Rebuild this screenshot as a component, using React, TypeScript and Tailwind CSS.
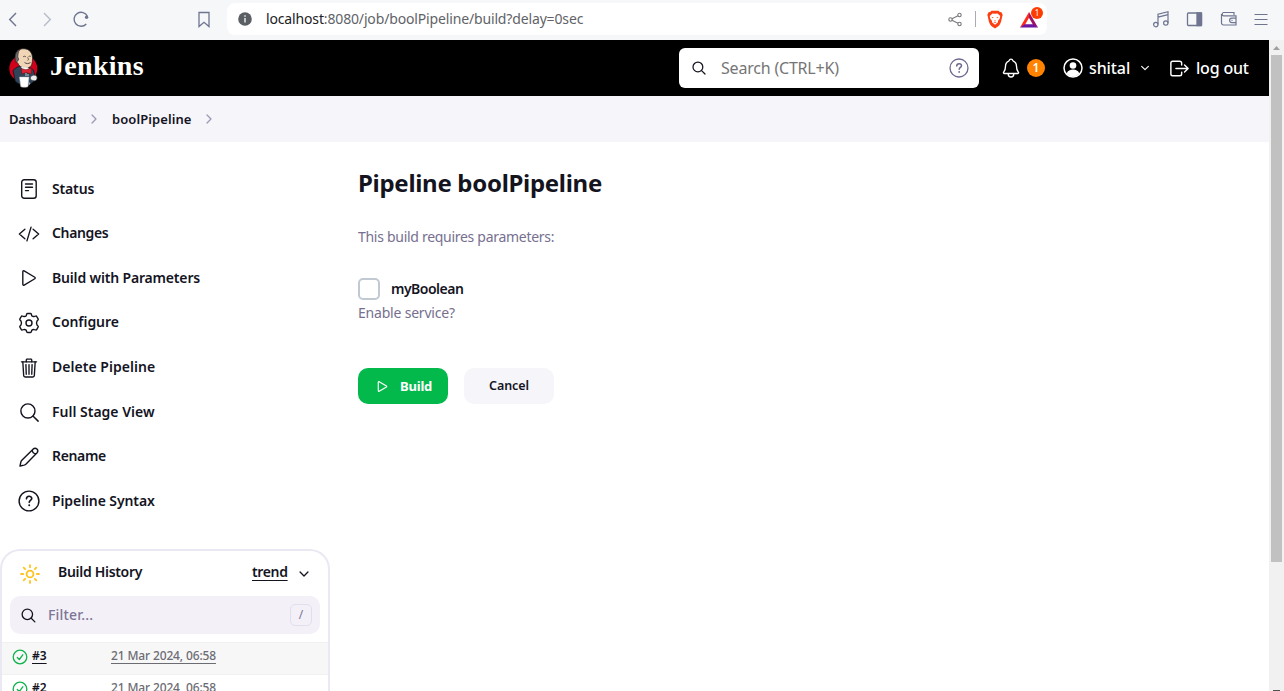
import React from "react";
import {
  IoCodeSlashOutline,
  IoPlayOutline,
  IoTrashOutline,
  IoSearchOutline,
  IoNotificationsOutline,
  IoLogOutOutline,
  IoChevronForward,
  IoChevronDown,
  IoSunnyOutline,
} from "react-icons/io5";

function BraveIcon() {
  return (
    <svg className="ml-[11px] h-[19px] w-4" viewBox="0 0 16 19">
      <path d="M4.500.7h7l1.300 1.400 1.700.2L15.700 5l-.5 1.500c-.6 3-1.200 6.500-2.700 8.600C11.500 16.500 9.200 18 8 18.500c-1.200-.5-3.500-2-4.500-3.400C2 13 1.400 9.500.8 6.500L.3 5l1.200-2.700 1.700-.2z" fill="#fb3f12" />
      <path d="m5.500 3.400 2.500.4 2.500-.4 2.700 2.500-.5 2.800-1.800 2.200.1 1.300L8 14.800l-3-2.600.1-1.300-1.800-2.200-.5-2.800z" fill="#fff" />
      <path d="m4.300 6.800 2.200.5-.6.900zM11.700 6.800l-2.200.5.6.9zM7 10.500h2L8 11.500zM6.300 12.400l1.700-.7 1.700.7-1.700.4z" fill="#fb3f12" />
    </svg>
  );
}

function BrowserBar() {
  return (
    <div className="flex h-10 w-full shrink-0 items-center bg-[#f5f7f9] text-[#6f7590]">
      <div className="flex w-[227px] items-center pb-[3px]">
        <svg className="ml-[5px] size-4" viewBox="0 0 16 16" fill="none" stroke="currentColor" strokeWidth="1.4">
          <path d="M11 2 4.700 8.500 11 15" />
        </svg>
        <svg className="ml-[18px] size-4 text-[#b8bcc8]" viewBox="0 0 16 16" fill="none" stroke="currentColor" strokeWidth="1.4">
          <path d="M5 2 11.300 8.500 5 15" />
        </svg>
        <svg className="ml-[17px] size-[18px]" viewBox="0 0 18 18" fill="none" stroke="currentColor" strokeWidth="1.4">
          <path d="M15.500 6.500A7 7 0 1 0 14.300 14" />
          <circle cx="14.600" cy="7.300" r="1.700" fill="currentColor" stroke="none" />
        </svg>
        <svg className="ml-[105px] size-[18px]" viewBox="0 0 18 18" fill="none" stroke="currentColor" strokeWidth="1.300">
          <path d="M4 2.500h10v14L9 12.300 4 16.500z" />
        </svg>
      </div>
      <div className="mb-0.5 flex h-8 w-[820px] items-center rounded-lg bg-white">
        <svg className="ml-[11px] size-[14px]" viewBox="0 0 14 14">
          <circle cx="7" cy="7" r="6.800" fill="#5a5f64" />
          <path d="M6.200 6h1.600v4.500H6.200zM6.200 3.300h1.600v1.500H6.200z" fill="#dfe1e4" />
        </svg>
        <span className="ml-[14px] w-[330px] whitespace-nowrap pb-0.5 text-[14px] tracking-[-0.15px] text-[#5f6368]">
          <span className="text-[#202124]">localhost</span>:8080/job/boolPipeline/build?delay=0sec
        </span>
        <svg className="ml-[352px] size-[15px]" viewBox="0 0 15 15" fill="none" stroke="#77797d" strokeWidth="1.100">
          <circle cx="2.500" cy="7.500" r="1.700" />
          <circle cx="11.500" cy="3" r="1.700" />
          <circle cx="11.500" cy="12" r="1.700" />
          <path d="m4 6.700 6-3M4 8.300l6 3" />
        </svg>
        <span className="ml-[12px] h-4 w-px bg-[#a9acb0]" />
        <BraveIcon />
        <span className="relative ml-[17px] size-[20px]">
          <svg className="mt-[2px] h-[17px] w-[18px]" viewBox="0 0 19 18">
            <path d="M9.500 1 0 17.500l5-2.500 4.500-7.800z" fill="#ff2a1a" />
            <path d="M9.500 1 19 17.500l-5-2.500-4.500-7.800z" fill="#9c1265" />
            <path d="M0 17.500h19L14 13.900H5z" fill="#6b15a0" />
          </svg>
          <span className="absolute -top-[2px] left-[11px] flex size-3 items-center justify-center rounded-full bg-[#ff3c00] text-[8px] text-white">1</span>
        </span>
      </div>
      <div className="flex flex-1 items-center pb-[2px] pl-[105px]">
        <svg className="size-[18px]" viewBox="0 0 18 18" fill="none" stroke="currentColor" strokeWidth="1.200">
          <path d="M6 14.500V4.200l10-2.500v11.200M6 7.200l10-2.500" />
          <circle cx="3.800" cy="14.600" r="2.200" />
          <circle cx="13.800" cy="13" r="2.200" />
        </svg>
        <svg className="ml-[16px] size-[17px]" viewBox="0 0 17 17" fill="none" stroke="currentColor" strokeWidth="1.300">
          <rect x="1.500" y="2" width="14" height="12.500" rx="1" />
          <path d="M11 2h4.500v12.500H11z" fill="currentColor" />
        </svg>
        <svg className="ml-[17px] size-[18px]" viewBox="0 0 18 18" fill="none" stroke="currentColor" strokeWidth="1.200">
          <path d="M14 5V2.500H3.500a1.700 1.700 0 0 0 0 3.300H16V15H3.500a2 2 0 0 1-2-2V4" />
          <path d="M16 8.200h-4.200a2.200 2.200 0 0 0 0 4.400H16M11.500 10.400h1" />
        </svg>
        <svg className="ml-[15px] size-4" viewBox="0 0 16 16" stroke="currentColor" strokeWidth="1.200">
          <path d="M1.500 3.500h13M1.500 8.500h13M1.500 13.500h13" />
        </svg>
      </div>
    </div>
  );
}

function JenkinsLogo() {
  return (
    <svg className="h-10 w-[30px]" viewBox="0 0 30 40">
      <ellipse cx="14.300" cy="20.500" rx="14" ry="13.500" fill="#d3001b" />
      <path d="M4 22.500c3-3 5.500-4.500 9-4.500 4 0 8 1 11.500 4l2.200 9.500c-3 3.500-7 6-11 6.200-5-1-8.500-3.200-9.500-5z" fill="#2f4459" stroke="#10151c" strokeWidth=".8" />
      <path d="M6.500 8c0-5 4-7.500 8.500-7.300 5.500.2 8.500 4.300 8.500 9.500 0 4.500-.5 9-5 9.800-4 .7-8-1-9.500-4.500C7 14 6.500 11 6.500 8z" fill="#f0d6b7" stroke="#231f20" strokeWidth=".8" />
      <path d="M7 14.500C5 9 6.500 3 11 1.500 8.700 4 9.300 6 8.800 8.500c-.2 1.200 1.300 2 .7 3.500-.6 1.200-1.400 1-2.500 2.500z" fill="#6d6b6d" stroke="#231f20" strokeWidth=".6" />
      <path d="M14 9c1-1 2-1 3 0M19.500 8.700c1-.8 1.800-.8 2.500 0M18.500 9.500c1 1.300 1.500 2 .2 3M15.500 14.500c2 1.400 4 1.400 6 0" fill="none" stroke="#4b403b" strokeWidth=".9" />
      <path d="m12 19 4 6 4-4.500-1-1z" fill="#fff" />
      <path d="m12 20.500 5 1.200 5.300-1.700v6L17 24.500l-4 1.500z" fill="#e02030" stroke="#65171a" strokeWidth=".6" />
      <path d="M17 25v3m2-2v2" stroke="#a8b2bd" strokeWidth="1.200" />
      <path d="M10.500 29h9.500l-1 9.500c-.2 1-7 1-7.300 0z" fill="#fff" stroke="#b7b7b7" strokeWidth=".5" />
      <path d="M21.500 29c1.500-2 5-2.500 6-1s.5 4-1 4.500-4 0-5-1.500z" fill="#f0eeed" stroke="#4c555d" strokeWidth=".7" />
      <path d="m20.500 34-1 3.500 2-1.800z" fill="#aeb9c4" />
    </svg>
  );
}

function Header() {
  return (
    <header className="flex h-14 w-full shrink-0 items-center bg-black text-white">
      <div className="ml-[9px] flex w-[670px] items-center">
        <JenkinsLogo />
        <span className="ml-[11px] pb-1 font-['Liberation_Serif',serif] text-[28px] font-bold leading-8 tracking-[0.3px]">Jenkins</span>
      </div>
      <div className="flex h-10 w-[300px] items-center rounded-md bg-white">
        <IoSearchOutline className="ml-[12px] size-4 text-[#14141f] [&_*]:[stroke-width:40px]" />
        <span className="ml-[14px] w-[228px] whitespace-nowrap text-[16px] tracking-[-0.2px] text-[#757575]">Search (CTRL+K)</span>
        <HelpIcon className="size-5 text-[#6f6790]" />
      </div>
      <IoNotificationsOutline className="ml-[21px] size-[22px]" />
      <span className="ml-[5px] flex size-[18px] items-center justify-center rounded-full bg-[#ff8200] text-[12px] font-semibold">1</span>
      <svg className="ml-[18px] size-5" viewBox="0 0 20 20">
        <circle cx="10" cy="10" r="9" fill="none" stroke="white" strokeWidth="1.500" />
        <circle cx="10" cy="7.500" r="3.300" fill="white" />
        <path d="M3.700 15.500c1-3 3.500-4 6.300-4s5.300 1 6.300 4A8.500 8.500 0 0 1 10 18.500a8.500 8.500 0 0 1-6.300-3z" fill="white" />
      </svg>
      <span className="ml-[6px] w-[42px] whitespace-nowrap text-[16px] font-medium tracking-[-0.1px]">shital</span>
      <IoChevronDown className="ml-[8px] size-3" />
      <IoLogOutOutline className="ml-[17px] size-[23px]" />
      <span className="ml-[5px] whitespace-nowrap text-[16px] font-medium tracking-[-0.2px]">log out</span>
    </header>
  );
}

function HelpIcon({ className }: { className: string }) {
  return (
    <svg className={className} viewBox="0 0 20 20" fill="none" stroke="currentColor" strokeWidth="1.300" strokeLinecap="round">
      <circle cx="10" cy="10" r="9" />
      <path d="M7.700 8c0-3 4.800-3 4.800-.3 0 1.700-2.300 1.800-2.300 3.500" strokeWidth="1.500" />
      <circle cx="10.200" cy="13.900" r=".9" fill="currentColor" stroke="none" />
    </svg>
  );
}

function StatusIcon() {
  return (
    <svg className="size-[22px]" viewBox="0 0 22 22" fill="none" stroke="currentColor" strokeWidth="1.400" strokeLinecap="round">
      <rect x="3.700" y="1.700" width="14.500" height="18.600" rx="2.500" />
      <path d="M7.500 6h7M7.500 9.300h7M7.500 12.600h3" />
    </svg>
  );
}

function GearIcon() {
  return (
    <svg className="size-[22px]" viewBox="0 0 22 22" fill="none" stroke="currentColor" strokeWidth="1.400" strokeLinejoin="round">
      <path d="M9.600 1.500h2.800q.8 0 1 .9l.3 1.300q1.300 1.200 2.800.7l1-.3q.9-.3 1.300.5l1.300 2.200q.4.800-.3 1.400l-.8.800q-1 2 0 4l.8.800q.7.600.3 1.400l-1.300 2.200q-.4.800-1.300.5l-1-.3q-1.500-.5-2.800.7l-.3 1.300q-.2.900-1 .9H9.600q-.8 0-1-.9l-.3-1.300q-1.300-1.200-2.800-.7l-1 .3q-.9.300-1.300-.5l-1.300-2.200q-.4-.8.300-1.400l.8-.8q1-2 0-4l-.8-.8q-.7-.6-.3-1.400l1.300-2.200q.4-.8 1.300-.5l1 .3q1.500.5 2.800-.7l.3-1.300q.2-.9 1-.9z" />
      <circle cx="11" cy="11" r="3" />
    </svg>
  );
}

function PencilIcon() {
  return (
    <svg className="size-[22px]" viewBox="0 0 22 22" fill="none" stroke="currentColor" strokeWidth="1.400" strokeLinejoin="round">
      <path d="M2 20 2.900 15.900Q3.200 14.800 4.100 13.900L15.300 2.900a2.700 2.700 0 0 1 3.800 3.800L8.100 17.900q-.9.900-2 1.200z" />
      <path d="M14.200 4q.2 3.600 3.800 3.800" />
    </svg>
  );
}

const tasks: [string, React.ReactNode, string][] = [
  ["Status", <StatusIcon />, "tracking-[-0.15px]"],
  ["Changes", <IoCodeSlashOutline className="size-[22px]" />, "tracking-[-0.35px]"],
  ["Build with Parameters", <IoPlayOutline className="size-[22px]" />, "tracking-[-0.17px]"],
  ["Configure", <GearIcon />, "tracking-[-0.05px]"],
  ["Delete Pipeline", <IoTrashOutline className="size-[22px]" />, "tracking-[0.03px]"],
  ["Full Stage View", <IoSearchOutline className="size-[23px]" />, "tracking-[0px]"],
  ["Rename", <PencilIcon />, "tracking-[-0.35px]"],
  ["Pipeline Syntax", <HelpIcon className="size-[22px]" />, "tracking-[-0.1px]"],
];

function BuildRow({ id, shaded }: { id: string; shaded?: boolean }) {
  return (
    <div className={`flex items-start border-t border-[#f1f1f4] pl-[10px] pt-[4px] text-[12px] leading-[18px] ${shaded ? "h-8 bg-[#f7f7f8]" : "h-[26px]"}`}>
      <svg className="mt-[2px] size-4 text-[#0fb34d]" viewBox="0 0 16 16" fill="none" stroke="currentColor" strokeWidth="1.300" strokeLinecap="round" strokeLinejoin="round">
        <circle cx="8" cy="8" r="6.800" />
        <path d="m5.300 8.500 2 2L10.800 5.800" />
      </svg>
      <span className="ml-[4px] w-[79px] font-semibold underline underline-offset-[3px]">{id}</span>
      <span className="whitespace-nowrap font-medium tracking-[-0.14px] text-[#6c6c73] underline underline-offset-[3px]">21 Mar 2024, 06:58</span>
    </div>
  );
}

function Sidebar() {
  return (
    <aside className="flex w-[330px] shrink-0 flex-col pt-[24px]">
      <nav className="flex flex-col">
        {tasks.map(([label, icon, tracking]) => (
          <div key={label} className="flex h-[44.6px] items-center pl-[17px]">
            <span className="mt-[2px] flex size-6 items-center justify-center">{icon}</span>
            <span className={`ml-[11px] whitespace-nowrap pb-[0.2px] text-[14px] font-semibold ${tracking}`}>{label}</span>
          </div>
        ))}
      </nav>
      <section className="mt-[26px] rounded-t-[20px] border-2 border-b-0 border-[#eae9f3]">
        <div className="flex h-[45px] items-center pl-[17px] text-[14px] font-semibold">
          <IoSunnyOutline className="mt-px size-[22px] text-[#ffc31f] [&_*]:[stroke-width:42px]" />
          <span className="ml-[17px] w-[194px] pb-[3px] tracking-[-0.3px]">Build History</span>
          <span className="w-[36px] pb-[3px] underline underline-offset-[3px] tracking-[-0.35px]">trend</span>
          <IoChevronDown className="ml-[9px] mt-0.5 size-[14px]" />
        </div>
        <div className="mx-2 flex h-[38px] items-center rounded-[10px] bg-[#f3f0f8]">
          <IoSearchOutline className="ml-[10px] mt-px size-[17px] [&_*]:[stroke-width:40px]" />
          <span className="ml-[11px] w-[242px] text-[14px] font-medium tracking-[0.2px] text-[#7c7595]">Filter...</span>
          <span className="flex h-[22px] w-[22px] items-center justify-center rounded-[5px] border border-[#e2deee] text-[12px] text-[#7c7595]">/</span>
        </div>
        <div className="mt-2">
          <BuildRow id="#3" shaded />
          <BuildRow id="#2" />
        </div>
      </section>
    </aside>
  );
}

function Main() {
  return (
    <main className="flex flex-1 flex-col items-start pl-7 pt-[25px]">
      <h1 className="text-[24px] font-bold leading-8 tracking-[-0.3px]">Pipeline boolPipeline</h1>
      <p className="mt-[28px] text-[14px] leading-5 tracking-[-0.29px] text-[#766f8f]">This build requires parameters:</p>
      <label className="mt-[31px] flex h-[22px] items-center">
        <span className="size-[22px] rounded-[5px] border-2 border-[#c1c9d2]" />
        <span className="ml-[11px] pb-0.5 text-[14px] font-semibold tracking-[-0.5px]">myBoolean</span>
      </label>
      <p className="mt-[3px] text-[14px] leading-5 tracking-[-0.2px] text-[#766f8f]">Enable service?</p>
      <div className="mt-[45px] flex gap-4">
        <button className="flex h-9 w-[90px] items-center rounded-[10px] bg-[#04b94c] pl-[17px] text-[13px] font-bold text-white">
          <IoPlayOutline className="size-[15px] [&_*]:[stroke-width:40px]" />
          <span className="ml-[10px] pt-px tracking-[-0.2px]">Build</span>
        </button>
        <button className="h-9 w-[90px] rounded-[10px] bg-[#f6f5fa] text-[12.500px] font-semibold tracking-[-0.1px]">Cancel</button>
      </div>
    </main>
  );
}

function Scrollbar() {
  return (
    <div className="flex w-[15px] shrink-0 flex-col items-center justify-between bg-[#f1f1f1]">
      <div className="flex flex-col items-center">
        <svg className="h-[15px] w-[11px]" viewBox="0 0 11 15">
          <path d="M2 10 5.500 6 9 10z" fill="#a0a0a0" />
        </svg>
        <div className="h-[507px] w-[11px] bg-[#c1c1c1]" />
      </div>
      <div className="h-px w-[7px] bg-[#505050]" />
    </div>
  );
}

export default function App() {
  return (
    <div className="flex h-[691px] w-[1284px] flex-col overflow-hidden bg-white font-['Noto_Sans',sans-serif] text-[#14141f]">
      <BrowserBar />
      <div className="flex min-h-0 flex-1">
        <div className="flex min-w-0 flex-1 flex-col overflow-hidden">
          <Header />
          <div className="flex h-[46px] shrink-0 items-center bg-[#f6f5fa] pl-[9px] text-[13px] font-semibold">
            <span className="w-[68px] pt-px tracking-[-0.2px]">Dashboard</span>
            <IoChevronForward className="ml-[10px] size-[14px] text-[#9d98b5]" />
            <span className="ml-[11px] w-[80px] pt-px tracking-[0.08px]">boolPipeline</span>
            <IoChevronForward className="ml-[10px] size-[14px] text-[#9d98b5]" />
          </div>
          <div className="flex min-h-0 flex-1">
            <Sidebar />
            <Main />
          </div>
        </div>
        <Scrollbar />
      </div>
    </div>
  );
}
